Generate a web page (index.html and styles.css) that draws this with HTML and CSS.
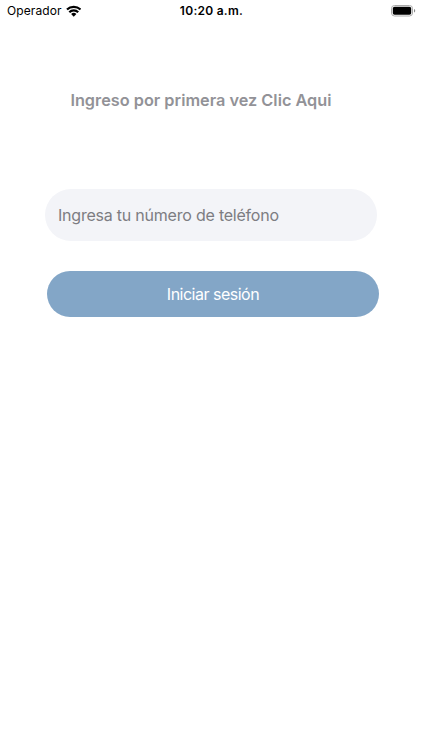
FILE: index.html
```html
<!DOCTYPE html>
<html lang="es">
<head>
<meta charset="utf-8">
<title>Iniciar sesión</title>
<link rel="stylesheet" href="styles.css">
</head>
<body>
<header class="status">
  <div class="carrier"><span class="carrier-name">Operador</span>
    <svg class="wifi" viewBox="0 0 16 12" width="15.500" height="12"><g fill="none" stroke="#000" stroke-width="2.3"><path d="M1 4.500a10 10 0 0 1 14 0"/><path d="M3.400 7.300a6.500 6.500 0 0 1 9.200 0"/></g><path d="M5.300 9.200a3.800 3.800 0 0 1 5.400 0L8 11.900z"/></svg>
  </div>
  <span class="clock">10:20 a.m.</span>
  <svg class="battery" viewBox="0 0 25 12" width="25" height="12"><rect x=".5" y=".5" width="21" height="10.500" rx="3" fill="none" stroke="#aaa"/><rect x="1.800" y="1.800" width="18.400" height="7.900" rx="1.700"/><path d="M23 4v3.600c.8-.3 1.200-1 1.200-1.800S23.800 4.300 23 4z" fill="#888"/></svg>
</header>
<main class="login">
  <a class="first">Ingreso por primera vez Clic Aqui</a>
  <div class="field"><span class="hint">Ingresa tu número de teléfono</span></div>
  <button class="submit"><span class="label">Iniciar sesión</span></button>
</main>
</body>
</html>
```
FILE: styles.css
```css
* { box-sizing: border-box; }
body { margin: 0; height: 750px; background: #fff; font-family: Inter, "Liberation Sans", sans-serif; overflow: hidden; }
.status { display: grid; grid-template-columns: 1fr auto 1fr; align-items: center; height: 21px; padding: 0 6px 0 7px; font-size: 12px; color: #000; }
.carrier { display: flex; align-items: center; gap: 4px; }
.carrier-name { letter-spacing: .1px; }
.clock { font-weight: 600; letter-spacing: .27px; }
.battery { justify-self: end; }
.login { display: flex; flex-direction: column; align-items: flex-start; }
.first { margin: 69px 0 0 70.4px; height: 20px; line-height: 20px; font-size: 16.3px; font-weight: 600; color: #929297; white-space: nowrap; }
.field { margin: 79px 0 0 45px; width: 332px; height: 52px; border-radius: 26px; background: #f3f4f8; padding-left: 13px; display: flex; align-items: center; font-size: 16px; letter-spacing: -.22px; color: #7d7d82; white-space: nowrap; }
.submit { margin: 30.400px 0 0 47px; width: 332px; height: 45.500px; border: 0; border-radius: 23px; background: #83a6c7; color: #fff; font: 16px Inter, sans-serif; letter-spacing: -.5px; }
```
